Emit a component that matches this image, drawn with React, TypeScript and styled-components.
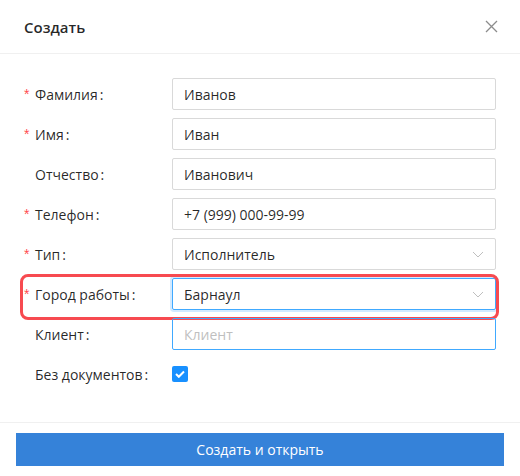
import React from "react";
import styled, { createGlobalStyle } from "styled-components";

const GlobalStyle = createGlobalStyle`
	html, body {
		margin: 0;
		padding: 0;
		background: #fff;
	}
	body {
		font-family: "Open Sans", "Noto Sans", "Liberation Sans", sans-serif;
		color: rgba(0, 0, 0, 0.85);
	}
`;

const Modal = styled.div`
	width: 520px;
	height: 476px;
	background: #fff;
	display: flex;
	flex-direction: column;
	box-sizing: border-box;
`;

const Header = styled.div`
	height: 54px;
	padding: 0 24px;
	display: flex;
	align-items: center;
	justify-content: space-between;
	border-bottom: 1px solid #f0f0f0;
`;

const Title = styled.div`
	font-size: 15px;
	font-weight: 600;
	color: rgba(0, 0, 0, 0.85);
`;

const Close = styled.button`
	border: 0;
	background: none;
	padding: 0;
	margin-right: -2px;
	width: 14px;
	height: 14px;
	display: flex;
	align-items: center;
	justify-content: center;
	cursor: pointer;
`;

const Body = styled.form`
	padding: 24px 24px 32px;
	display: flex;
	flex-direction: column;
	gap: 8px;
	border-bottom: 1px solid #f0f0f0;
`;

const Row = styled.div`
	position: relative;
	display: flex;
	align-items: center;
	height: 32px;
`;

const Label = styled.label<{ $required?: boolean }>`
	width: 148px;
	display: flex;
	align-items: center;
	font-size: 14px;
	color: rgba(0, 0, 0, 0.85);
	&::before {
		content: "*";
		width: 11px;
		color: #ff4d4f;
		font-family: "Liberation Sans", sans-serif;
		font-size: 14px;
		visibility: ${(p) => (p.$required ? "visible" : "hidden")};
	}
	&::after {
		content: ":";
		margin-left: 2px;
	}
`;

const Field = styled.div<{ $active?: boolean; $focus?: boolean }>`
	flex: 1;
	height: 32px;
	box-sizing: border-box;
	border: 1px solid ${(p) => (p.$active ? "#40a9ff" : "#d9d9d9")};
	border-radius: 2px;
	display: flex;
	align-items: center;
	padding: 0 11px;
	font-size: 14px;
	color: rgba(0, 0, 0, 0.85);
	box-shadow: ${(p) => (p.$focus ? "0 0 0 2px rgba(24, 144, 255, 0.2)" : "none")};
`;

const Value = styled.span<{ $placeholder?: boolean }>`
	flex: 1;
	color: ${(p) => (p.$placeholder ? "#bfbfbf" : "rgba(0, 0, 0, 0.85)")};
`;

const Highlight = styled.div`
	position: absolute;
	left: -4px;
	top: -4px;
	right: -3px;
	bottom: -10px;
	border: 3px solid #f74a50;
	border-radius: 8px;
	pointer-events: none;
`;

const Check = styled.span`
	width: 16px;
	height: 16px;
	border-radius: 2px;
	background: #1890ff;
	display: flex;
	align-items: center;
	justify-content: center;
`;

const Footer = styled.div`
	padding: 10px 16px;
`;

const Submit = styled.button`
	width: 100%;
	height: 33px;
	border: 0;
	border-radius: 0;
	background: #3582d9;
	color: #fff;
	font-family: inherit;
	font-size: 14px;
	cursor: pointer;
`;

const Chevron = () => (
	<svg width="12" height="7" viewBox="0 0 12 7" fill="none">
		<path d="M1 1l5 5 5-5" stroke="#bfbfbf" strokeWidth="1" />
	</svg>
);

const App = () => {
	return (
		<Modal>
			<GlobalStyle />
			<Header>
				<Title>Создать</Title>
				<Close type="button" aria-label="Закрыть">
					<svg width="13" height="13" viewBox="0 0 13 13">
						<path d="M1 1l11 11M12 1L1 12" stroke="#8c8c8c" strokeWidth="1.3" />
					</svg>
				</Close>
			</Header>
			<Body>
				<Row>
					<Label $required>Фамилия</Label>
					<Field>
						<Value>Иванов</Value>
					</Field>
				</Row>
				<Row>
					<Label $required>Имя</Label>
					<Field>
						<Value>Иван</Value>
					</Field>
				</Row>
				<Row>
					<Label>Отчество</Label>
					<Field>
						<Value>Иванович</Value>
					</Field>
				</Row>
				<Row>
					<Label $required>Телефон</Label>
					<Field>
						<Value>+7 (999) 000-99-99</Value>
					</Field>
				</Row>
				<Row>
					<Label $required>Тип</Label>
					<Field>
						<Value>Исполнитель</Value>
						<Chevron />
					</Field>
				</Row>
				<Row>
					<Label $required>Город работы</Label>
					<Field $active $focus>
						<Value>Барнаул</Value>
						<Chevron />
					</Field>
					<Highlight />
				</Row>
				<Row>
					<Label>Клиент</Label>
					<Field $active>
						<Value $placeholder>Клиент</Value>
					</Field>
				</Row>
				<Row>
					<Label>Без документов</Label>
					<Check>
						<svg width="10" height="8" viewBox="0 0 10 8">
							<path d="M1 4l2.8 2.8L9 1.5" stroke="#fff" strokeWidth="2" fill="none" />
						</svg>
					</Check>
				</Row>
			</Body>
			<Footer>
				<Submit type="button">Создать и открыть</Submit>
			</Footer>
		</Modal>
	);
};

export default App;
